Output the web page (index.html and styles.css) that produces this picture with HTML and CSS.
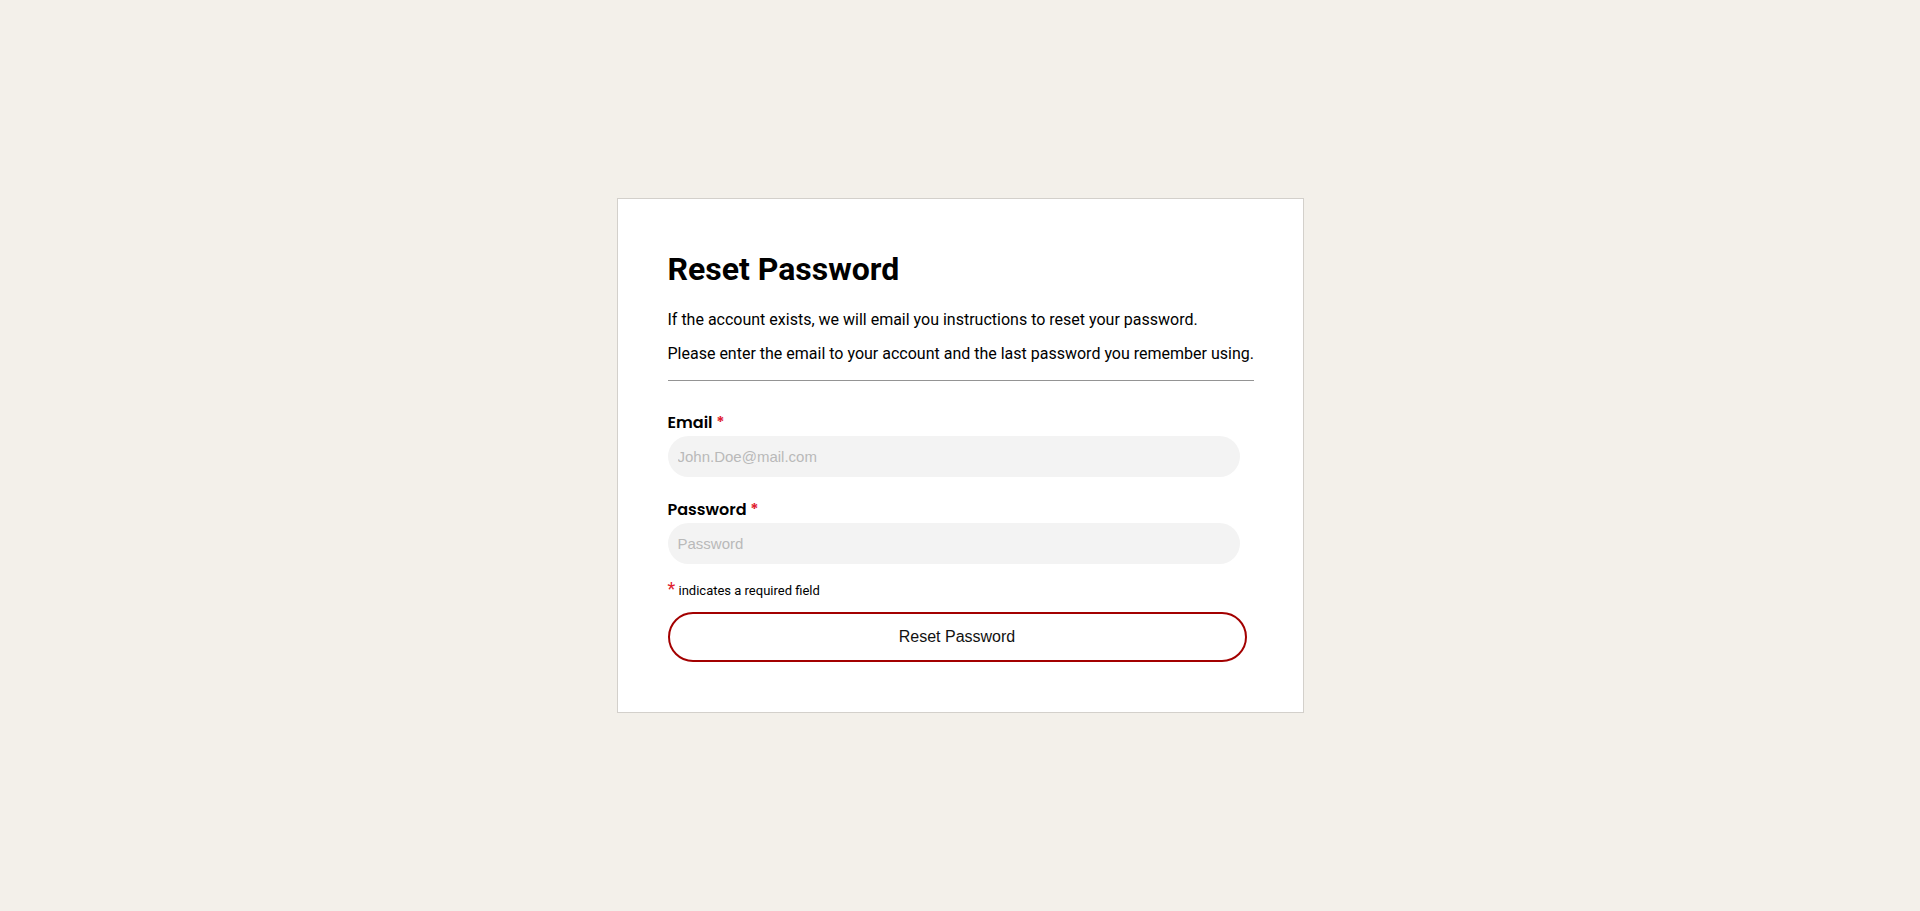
FILE: index.html
```html
<!DOCTYPE html>
<html lang="en">
<head>
<meta charset="utf-8">
<title>Reset Password</title>
<link rel="stylesheet" href="styles.css">
</head>
<body>
<main class="page">
  <section class="card">
    <h1 class="title">Reset Password</h1>
    <p class="text">If the account exists, we will email you instructions to reset your password.</p>
    <p class="text">Please enter the email to your account and the last password you remember using.</p>
    <hr class="divider">
    <form class="form">
      <label class="label" for="email">Email <span class="req">*</span></label>
      <input class="input" id="email" type="email" placeholder="John.Doe@mail.com">
      <label class="label label-gap" for="password">Password <span class="req">*</span></label>
      <input class="input" id="password" type="password" placeholder="Password">
      <div class="note"><span class="note-star">*</span> indicates a required field</div>
      <button class="btn" type="button">Reset Password</button>
    </form>
  </section>
</main>
</body>
</html>
```

FILE: styles.css
```css
html, body {
  margin: 0;
  padding: 0;
}
body {
  background: #f3f0ea;
  font-family: Roboto, "Liberation Sans", Arial, sans-serif;
  color: #000;
}
.page {
  min-height: 911px;
  display: flex;
  align-items: center;
  justify-content: center;
}
.card {
  box-sizing: border-box;
  width: 687px;
  height: 515px;
  background: #fff;
  border: 1px solid #d3d0cb;
  padding: 52px 49px 50px 50px;
}
.title {
  margin: 0 0 22px 0;
  font-family: Roboto, sans-serif;
  font-weight: 700;
  font-size: 32px;
  line-height: 37.5px;
  color: #000;
}
.text {
  margin: 16px 0;
  font-size: 16px;
  line-height: 18.75px;
  white-space: nowrap;
  color: #000;
}
.divider {
  margin: 16px 0 0 0;
  border: 0;
  border-top: 1px solid #949494;
  height: 0;
}
.form {
  display: flex;
  flex-direction: column;
  align-items: flex-start;
  padding-top: 32px;
}
.label {
  display: block;
  font-family: Poppins, Inter, sans-serif;
  font-weight: 600;
  font-size: 16px;
  line-height: 20px;
  margin-bottom: 3px;
  color: #000;
}
.label-gap {
  margin-top: 23px;
}
.req {
  color: #e0202f;
}
.input {
  box-sizing: border-box;
  width: 572px;
  height: 41px;
  border: 0;
  border-radius: 21px;
  background: #f3f3f3;
  padding: 0 10px;
  font-family: "Liberation Sans", Arial, sans-serif;
  font-size: 15px;
  color: #000;
  outline: none;
}
.input::placeholder {
  color: #b9b9b9;
}
.note {
  margin-top: 15px;
  font-family: Roboto, sans-serif;
  font-size: 13px;
  line-height: 20px;
  color: #000;
}
.note-star {
  color: #e0202f;
  font-size: 18px;
}
.btn {
  box-sizing: border-box;
  margin-top: 11px;
  width: 579px;
  height: 50px;
  background: #fff;
  border: 2px solid #a30000;
  border-radius: 25px;
  font-family: "Liberation Sans", Arial, sans-serif;
  font-size: 16px;
  color: #111;
  cursor: pointer;
}
```
